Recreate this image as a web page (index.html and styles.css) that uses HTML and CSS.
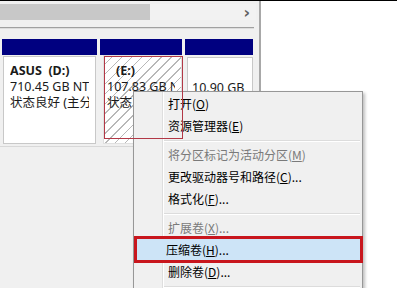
FILE: index.html
```html
<!DOCTYPE html>
<html lang="zh-CN">
<head>
<meta charset="utf-8">
<link rel="stylesheet" href="styles.css">
</head>
<body>
<div class="top-line"></div>
<div class="main">
  <div class="left">
    <div class="hscroll">
      <div class="thumb"></div>
      <div class="track"><span class="arrow">&#x203A;</span></div>
    </div>
    <div class="hline"></div>
    <div class="disks">
      <div class="disk d1">
        <div class="cap"></div>
        <div class="box">
          <div class="ln b">ASUS&nbsp;&nbsp;(D:)</div>
          <div class="ln">710.45 GB NTFS</div>
          <div class="ln">状态良好 (主分区)</div>
        </div>
      </div>
      <div class="disk d2">
        <div class="cap"></div>
        <div class="box hatch">
          <div class="ln b ind">(E:)</div>
          <div class="ln">107.83 GB NTFS</div>
          <div class="ln">状态良好 (主分区)</div>
        </div>
      </div>
      <div class="disk d3">
        <div class="cap"></div>
        <div class="box">
          <div class="ln">&nbsp;</div>
          <div class="ln">10.90 GB</div>
          <div class="ln">未分配</div>
        </div>
      </div>
    </div>
    <div class="bottom-line"></div>
  </div>
  <div class="vline"></div>
  <div class="right"></div>
</div>

<div class="menu">
  <div class="item">打开(<u>O</u>)</div>
  <div class="item">资源管理器(<u>E</u>)</div>
  <div class="sep"></div>
  <div class="item dis">将分区标记为活动分区(<u>M</u>)</div>
  <div class="item">更改驱动器号和路径(<u>C</u>)...</div>
  <div class="item">格式化(<u>F</u>)...</div>
  <div class="sep"></div>
  <div class="item dis">扩展卷(<u>X</u>)...</div>
  <div class="item hot">压缩卷(<u>H</u>)...</div>
  <div class="item">删除卷(<u>D</u>)...</div>
  <div class="sep"></div>
</div>

<div class="sel-e"></div>
<div class="mark"></div>
</body>
</html>
```

FILE: styles.css
```css
html, body {
  margin: 0;
  padding: 0;
}
body {
  width: 397px;
  height: 288px;
  overflow: hidden;
  background: #fff;
  font-family: "Noto Sans", "Noto Sans CJK SC", sans-serif;
  font-size: 12px;
  color: #000;
  position: relative;
}
.top-line {
  height: 1px;
  background: #000;
}
.main {
  display: flex;
  height: 287px;
}
.left {
  width: 259px;
  background: #f0f0f0;
  display: flex;
  flex-direction: column;
}
.hscroll {
  margin-top: 3px;
  height: 16px;
  display: flex;
  width: 256px;
  flex: none;
}
.thumb {
  width: 150px;
  flex: none;
  background: #c8c8c8;
}
.track {
  flex: 1;
  background: #f2f2f2;
  display: flex;
  justify-content: flex-end;
  align-items: center;
  padding-right: 6px;
}
.arrow {
  font-family: "DejaVu Sans", sans-serif;
  font-size: 16px;
  font-weight: bold;
  color: #606060;
  line-height: 16px;
  position: relative;
  top: 1px;
}
.hline {
  margin-top: 7px;
  width: 254px;
  height: 1px;
  background: #a0a0a0;
  border-bottom: 1px solid #dcdcdc;
  flex: none;
}
.disks {
  margin-top: 10px;
  display: flex;
  padding-left: 2px;
  gap: 3px;
}
.disk {
  display: flex;
  flex-direction: column;
}
.d1 { width: 95px; }
.d2 { width: 82px; }
.d3 { width: 68px; }
.cap {
  height: 16px;
  background: #000080;
}
.box {
  margin: 1px 1px 0 1px;
  height: 80px;
  background: #fff;
  border: 1px solid #c8c8c8;
  padding: 6px 6px 0 6px;
  overflow: hidden;
}
.d2 .box {
  margin: 0 0 0 3px;
  padding: 7px 6px 0 3px;
  border-color: #e0e0e0;
}
.d3 .box {
  margin: 2px 0 0 2px;
  padding-left: 4px;
}
.hatch {
  background: repeating-linear-gradient(135deg, #fff 0, #fff 6px, #b8b8b8 6px, #b8b8b8 7px);
}
.ln {
  line-height: 16px;
  font-size: 12.5px;
  white-space: nowrap;
  overflow: hidden;
  color: #1a1a1a;
}
.b {
  font-weight: bold;
}
.ind {
  padding-left: 9px;
}
.bottom-line {
  margin-top: 1px;
  height: 1px;
  background: #d8d8d8;
}
.vline {
  width: 2px;
  background: #a8a8a8;
}
.right {
  flex: 1;
  background: #fff;
}
.menu {
  position: absolute;
  left: 133px;
  top: 91px;
  width: 228px;
  height: 210px;
  border: 1px solid #979797;
  background:
    linear-gradient(to right, transparent 28px, #dedede 28px, #dedede 29px, #fff 29px, #fff 30px, transparent 30px),
    #f0f0f0;
  box-shadow: 2px 2px 3px rgba(0, 0, 0, 0.25);
  padding-top: 1px;
  font-family: "Noto Sans CJK SC", sans-serif;
}
.item {
  height: 22px;
  line-height: 22px;
  padding-left: 32px;
  margin: 0 2px;
  white-space: nowrap;
}
.item u {
  text-decoration: underline;
  text-underline-offset: 1px;
}
.dis {
  color: #7a7a7a;
}
.hot {
  background: #cde4f7;
  padding-left: 30px;
}
.sep {
  height: 7px;
  margin-left: 30px;
  margin-right: 2px;
  background: linear-gradient(to bottom, transparent 3px, #dcdcdc 3px, #dcdcdc 4px, #fff 4px, #fff 5px, transparent 5px);
}
.sel-e {
  position: absolute;
  left: 104px;
  top: 56px;
  width: 77px;
  height: 81px;
  border: 1px solid #b23846;
}
.mark {
  position: absolute;
  left: 134px;
  top: 236px;
  width: 223px;
  height: 21px;
  border: 3px solid #c8161d;
}
```
